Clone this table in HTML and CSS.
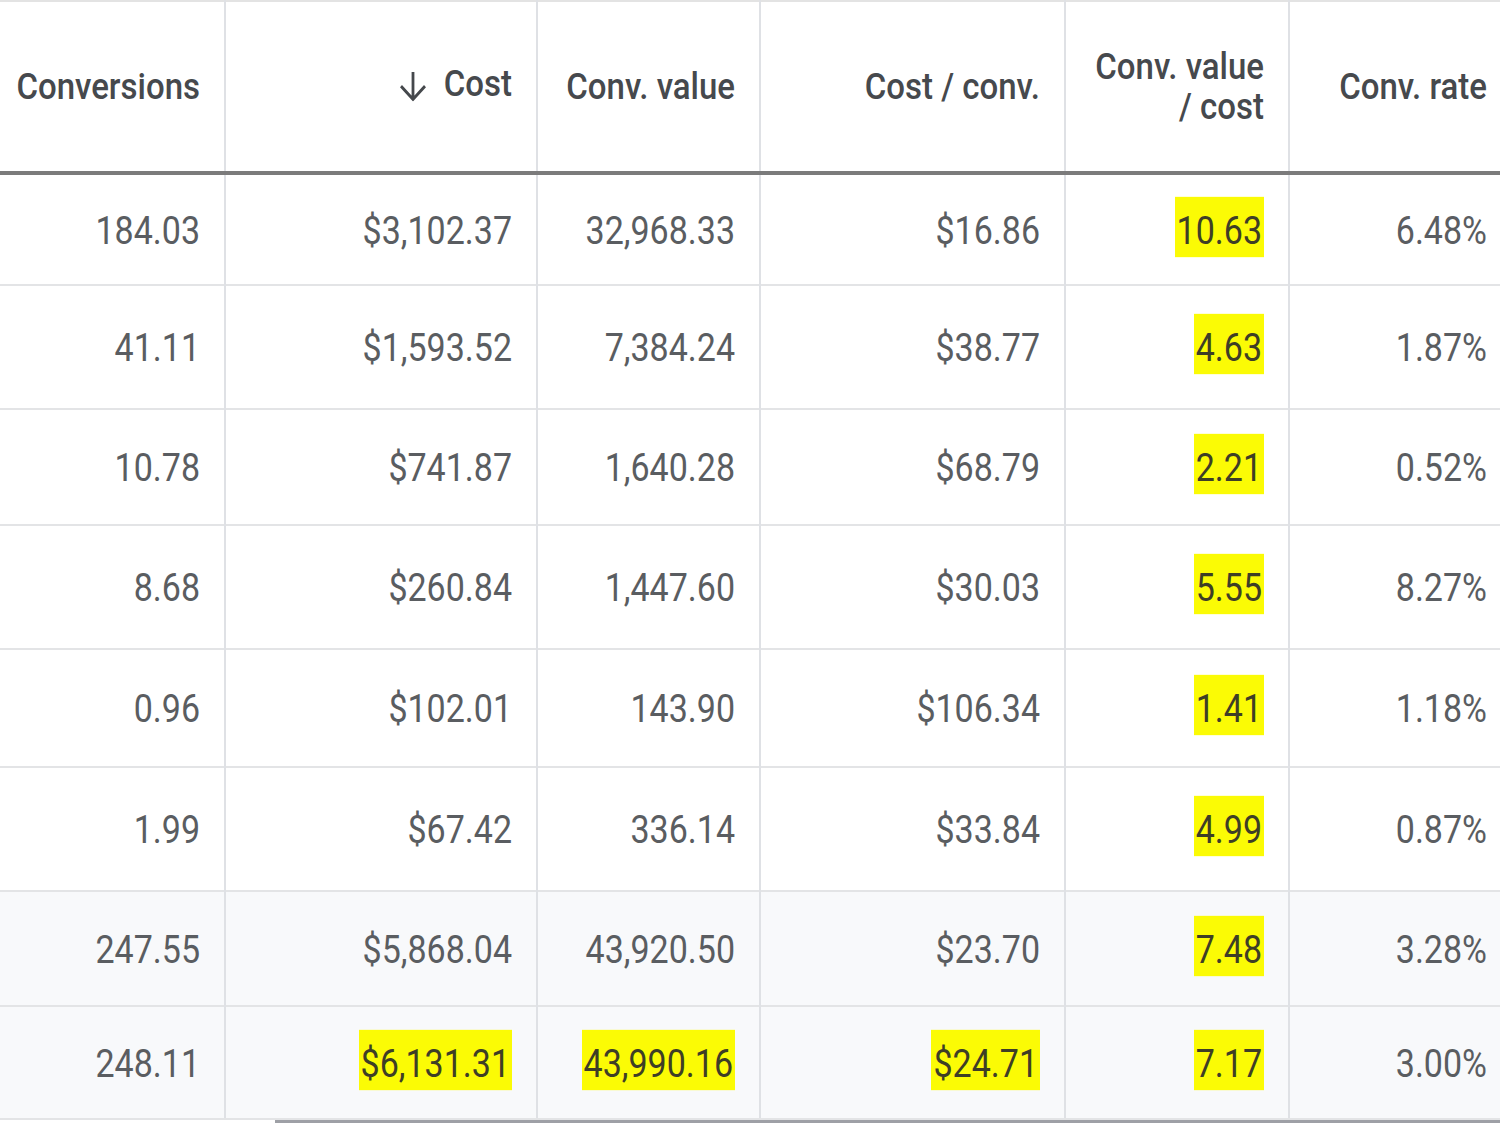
FILE: index.html
```html
<!DOCTYPE html>
<html lang="en">
<head>
<meta charset="utf-8">
<title>Campaign metrics</title>
<link rel="stylesheet" href="styles.css">
</head>
<body>
<div class="frame">
  <table class="grid">
    <colgroup>
      <col class="c1"><col class="c2"><col class="c3"><col class="c4"><col class="c5"><col class="c6">
    </colgroup>
    <thead>
      <tr>
        <th><span class="t">Conversions</span></th>
        <th><span class="t sort"><svg class="arrow" viewBox="0 0 30 28" width="30" height="28"><path d="M15 1v25M3 14l12 12 12-12" fill="none" stroke="#45484c" stroke-width="2.8"/></svg>Cost</span></th>
        <th><span class="t">Conv. value</span></th>
        <th><span class="t">Cost / conv.</span></th>
        <th><span class="t">Conv. value<br>/ cost</span></th>
        <th><span class="t">Conv. rate</span></th>
      </tr>
    </thead>
    <tbody>
      <tr class="r1"><td><span class="v">184.03</span></td><td><span class="v">$3,102.37</span></td><td><span class="v">32,968.33</span></td><td><span class="v">$16.86</span></td><td><span class="v hl">10.63</span></td><td><span class="v">6.48%</span></td></tr>
      <tr class="r2"><td><span class="v">41.11</span></td><td><span class="v">$1,593.52</span></td><td><span class="v">7,384.24</span></td><td><span class="v">$38.77</span></td><td><span class="v hl">4.63</span></td><td><span class="v">1.87%</span></td></tr>
      <tr class="r3"><td><span class="v">10.78</span></td><td><span class="v">$741.87</span></td><td><span class="v">1,640.28</span></td><td><span class="v">$68.79</span></td><td><span class="v hl">2.21</span></td><td><span class="v">0.52%</span></td></tr>
      <tr class="r4"><td><span class="v">8.68</span></td><td><span class="v">$260.84</span></td><td><span class="v">1,447.60</span></td><td><span class="v">$30.03</span></td><td><span class="v hl">5.55</span></td><td><span class="v">8.27%</span></td></tr>
      <tr class="r5"><td><span class="v">0.96</span></td><td><span class="v">$102.01</span></td><td><span class="v">143.90</span></td><td><span class="v">$106.34</span></td><td><span class="v hl">1.41</span></td><td><span class="v">1.18%</span></td></tr>
      <tr class="r6"><td><span class="v">1.99</span></td><td><span class="v">$67.42</span></td><td><span class="v">336.14</span></td><td><span class="v">$33.84</span></td><td><span class="v hl">4.99</span></td><td><span class="v">0.87%</span></td></tr>
      <tr class="r7 total"><td><span class="v">247.55</span></td><td><span class="v">$5,868.04</span></td><td><span class="v">43,920.50</span></td><td><span class="v">$23.70</span></td><td><span class="v hl">7.48</span></td><td><span class="v">3.28%</span></td></tr>
      <tr class="r8 total"><td><span class="v">248.11</span></td><td><span class="v hl">$6,131.31</span></td><td><span class="v hl">43,990.16</span></td><td><span class="v hl">$24.71</span></td><td><span class="v hl">7.17</span></td><td><span class="v">3.00%</span></td></tr>
    </tbody>
  </table>
  <div class="scrollbar"><div class="thumb"></div></div>
</div>
</body>
</html>
```

FILE: styles.css
```css
html, body {
  margin: 0;
  padding: 0;
  background: #ffffff;
  overflow: hidden;
}

.frame {
  width: 1511px;
  font-family: Roboto, "Liberation Sans", Arial, sans-serif;
}

.grid {
  border-collapse: collapse;
  table-layout: fixed;
  width: 1511px;
  border-top: 2px solid #e3e3e3;
}

.c1 { width: 225px; }
.c2 { width: 312px; }
.c3 { width: 223px; }
.c4 { width: 305px; }
.c5 { width: 224px; }
.c6 { width: 222px; }

th, td {
  text-align: right;
  padding: 0 24px 0 10px;
  border-left: 2px solid #dfe1e5;
  white-space: nowrap;
}

th:first-child, td:first-child {
  border-left: none;
}

th {
  height: 169px;
  font-size: 33px;
  font-weight: 500;
  color: #46494d;
  line-height: 36px;
  border-bottom: 4px solid #7b7b7b;
  vertical-align: middle;
}

.t {
  display: inline-block;
  transform: scaleY(1.1);
  transform-origin: 50% 50%;
}

td {
  font-size: 34px;
  font-weight: 400;
  color: #5a5d61;
  border-top: 2px solid #e3e4e6;
  vertical-align: middle;
}

.v {
  display: inline-block;
  line-height: 34px;
  transform: scaleY(1.16);
  transform-origin: 50% 50%;
}

tbody tr:first-child td { border-top: none; }

.r1 td { height: 109px; }
.r2 td { height: 122px; }
.r3 td { height: 114px; }
.r4 td { height: 122px; }
.r5 td { height: 116px; }
.r6 td { height: 122px; }
.r7 td { height: 113px; }
.r8 td { height: 111px; border-bottom: 2px solid #e3e4e6; }

.total td { background: #f8f9fb; }

.sort {
  display: inline-flex;
  align-items: center;
  gap: 16px;
}

.arrow { display: block; margin-top: 4px; }

.hl {
  background: #fbfb05;
  color: #3e3e26;
  padding: 12px 2px 6px 2px;
  margin-top: -6px;
}

.scrollbar {
  height: 3px;
  padding-left: 275px;
}

.thumb {
  height: 3px;
  background: #9ea0a6;
}
```
